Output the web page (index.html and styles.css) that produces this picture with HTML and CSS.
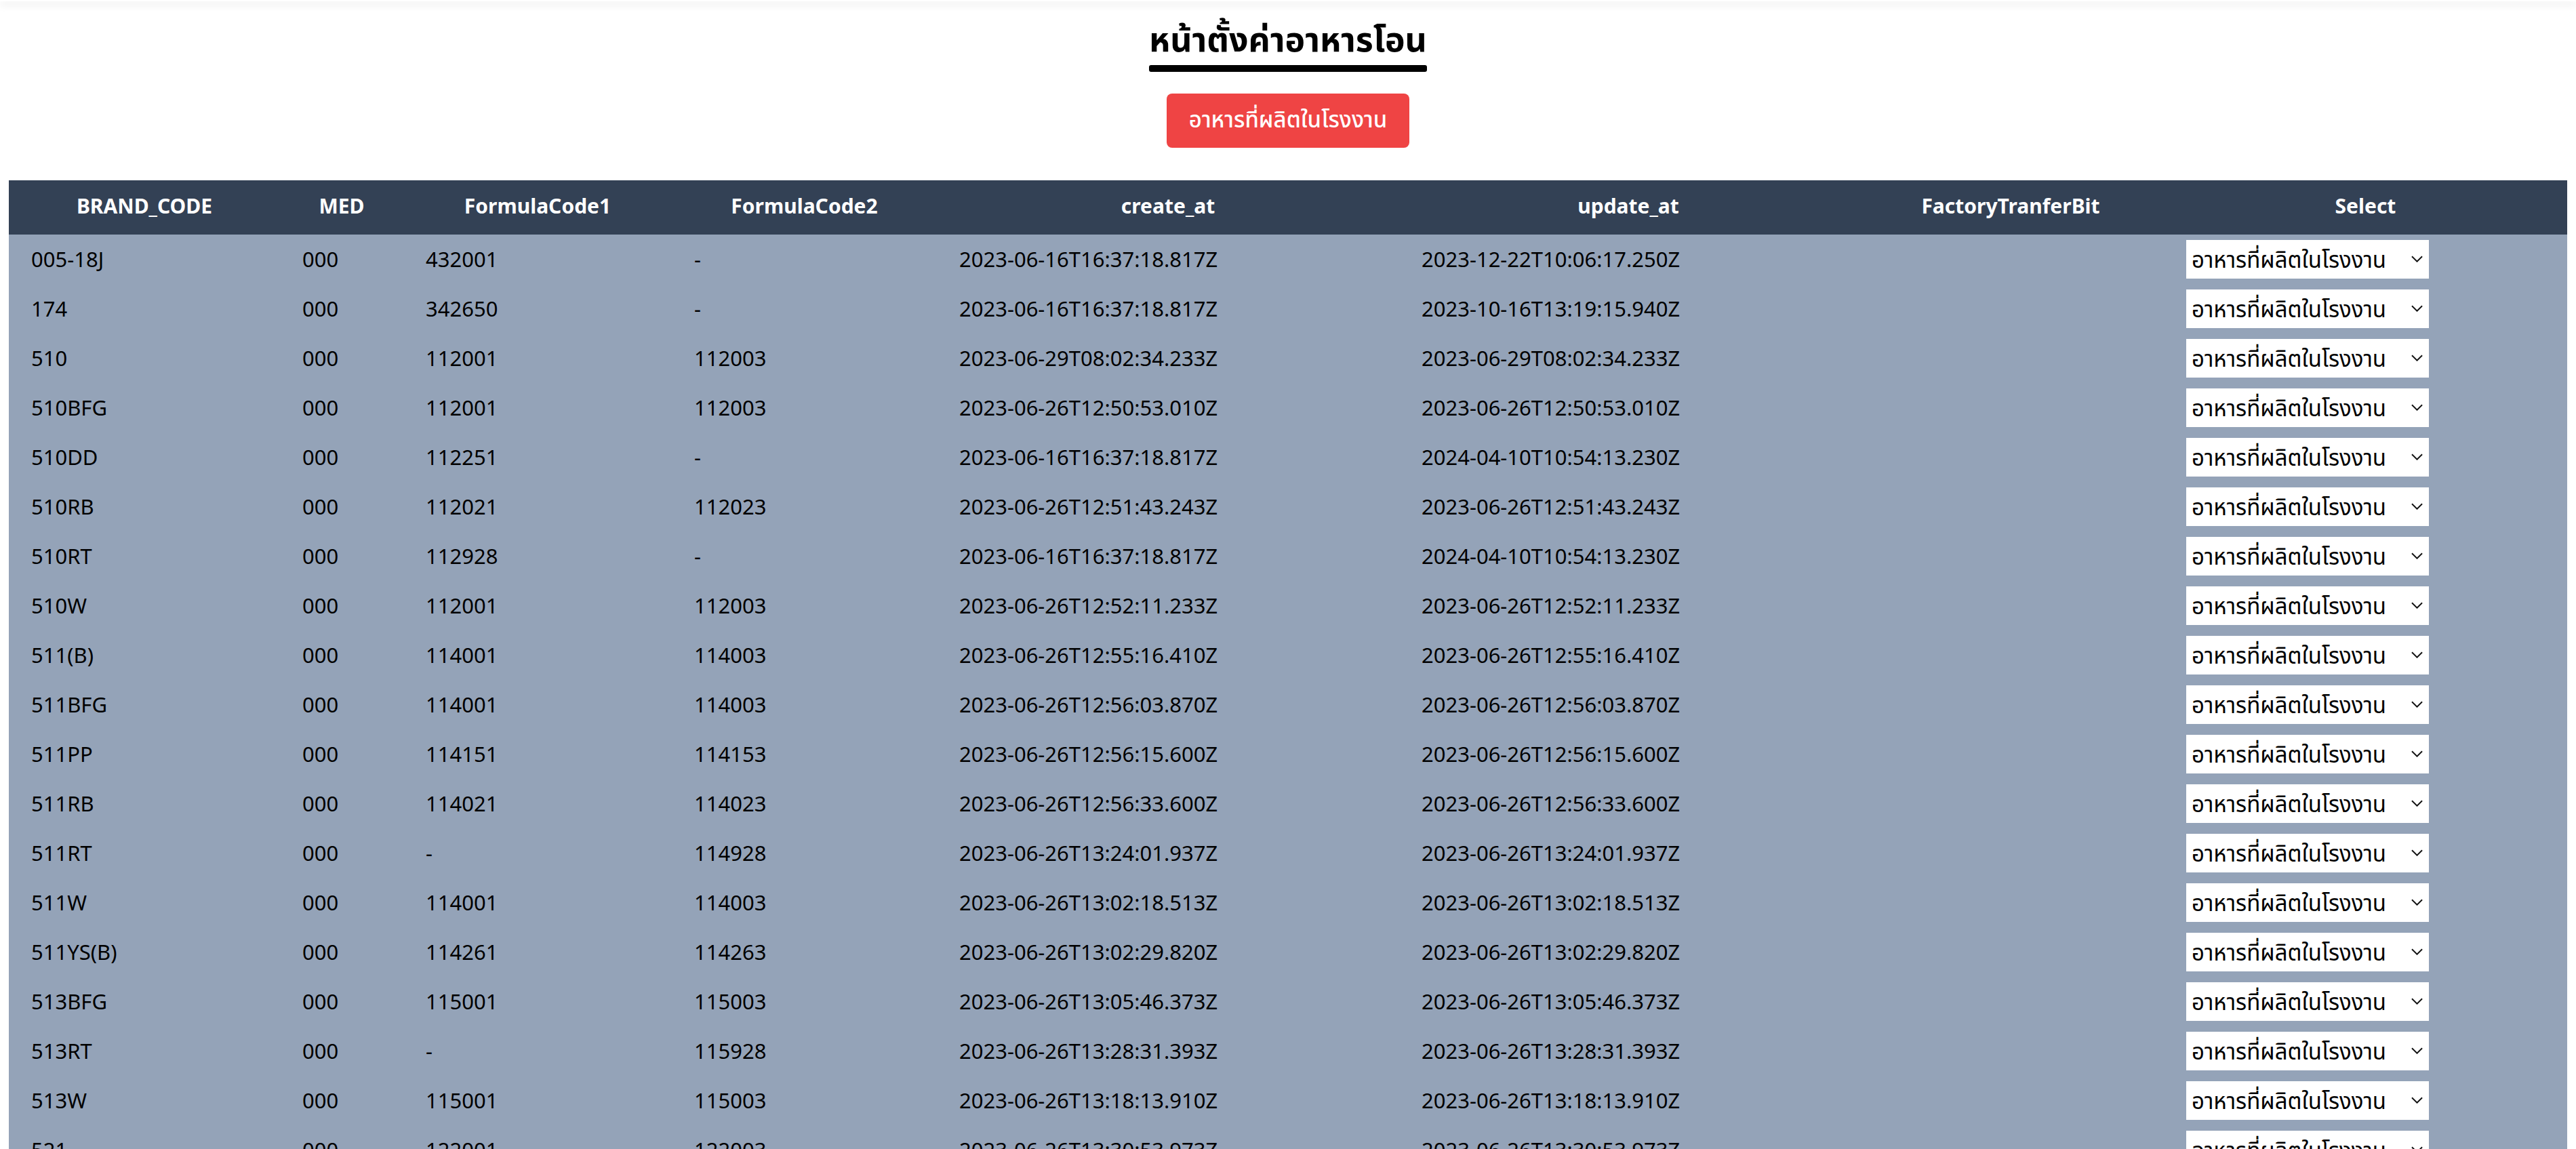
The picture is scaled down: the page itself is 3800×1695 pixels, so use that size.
FILE: index.html
```html
<!DOCTYPE html>
<html lang="th">
<head>
<meta charset="utf-8">
<title>หน้าตั้งค่าอาหารโอน</title>
<link rel="stylesheet" href="styles.css">
</head>
<body>
<div class="topbar"></div>
<main class="page">
  <div class="title-wrap">
    <h1 class="title">หน้าตั้งค่าอาหารโอน</h1>
    <div class="title-bar"></div>
  </div>
  <div class="actions">
    <button class="btn-red" type="button">อาหารที่ผลิตในโรงงาน</button>
  </div>
  <table class="grid">
    <colgroup>
      <col class="c-brand"><col class="c-med"><col class="c-f1"><col class="c-f2"><col class="c-create"><col class="c-update"><col class="c-bit"><col class="c-select">
    </colgroup>
    <thead>
      <tr>
        <th>BRAND_CODE</th><th>MED</th><th>FormulaCode1</th><th>FormulaCode2</th><th>create_at</th><th>update_at</th><th>FactoryTranferBit</th><th>Select</th>
      </tr>
    </thead>
    <tbody>
      <tr><td>005-18J</td><td>000</td><td>432001</td><td>-</td><td>2023-06-16T16:37:18.817Z</td><td>2023-12-22T10:06:17.250Z</td><td></td><td><div class="sel"><select><option>อาหารที่ผลิตในโรงงาน</option></select><svg class="chev" viewBox="0 0 18 10"><path d="M1 1 L9 9 L17 1" fill="none" stroke="#111" stroke-width="2"/></svg></div></td></tr>
      <tr><td>174</td><td>000</td><td>342650</td><td>-</td><td>2023-06-16T16:37:18.817Z</td><td>2023-10-16T13:19:15.940Z</td><td></td><td><div class="sel"><select><option>อาหารที่ผลิตในโรงงาน</option></select><svg class="chev" viewBox="0 0 18 10"><path d="M1 1 L9 9 L17 1" fill="none" stroke="#111" stroke-width="2"/></svg></div></td></tr>
      <tr><td>510</td><td>000</td><td>112001</td><td>112003</td><td>2023-06-29T08:02:34.233Z</td><td>2023-06-29T08:02:34.233Z</td><td></td><td><div class="sel"><select><option>อาหารที่ผลิตในโรงงาน</option></select><svg class="chev" viewBox="0 0 18 10"><path d="M1 1 L9 9 L17 1" fill="none" stroke="#111" stroke-width="2"/></svg></div></td></tr>
      <tr><td>510BFG</td><td>000</td><td>112001</td><td>112003</td><td>2023-06-26T12:50:53.010Z</td><td>2023-06-26T12:50:53.010Z</td><td></td><td><div class="sel"><select><option>อาหารที่ผลิตในโรงงาน</option></select><svg class="chev" viewBox="0 0 18 10"><path d="M1 1 L9 9 L17 1" fill="none" stroke="#111" stroke-width="2"/></svg></div></td></tr>
      <tr><td>510DD</td><td>000</td><td>112251</td><td>-</td><td>2023-06-16T16:37:18.817Z</td><td>2024-04-10T10:54:13.230Z</td><td></td><td><div class="sel"><select><option>อาหารที่ผลิตในโรงงาน</option></select><svg class="chev" viewBox="0 0 18 10"><path d="M1 1 L9 9 L17 1" fill="none" stroke="#111" stroke-width="2"/></svg></div></td></tr>
      <tr><td>510RB</td><td>000</td><td>112021</td><td>112023</td><td>2023-06-26T12:51:43.243Z</td><td>2023-06-26T12:51:43.243Z</td><td></td><td><div class="sel"><select><option>อาหารที่ผลิตในโรงงาน</option></select><svg class="chev" viewBox="0 0 18 10"><path d="M1 1 L9 9 L17 1" fill="none" stroke="#111" stroke-width="2"/></svg></div></td></tr>
      <tr><td>510RT</td><td>000</td><td>112928</td><td>-</td><td>2023-06-16T16:37:18.817Z</td><td>2024-04-10T10:54:13.230Z</td><td></td><td><div class="sel"><select><option>อาหารที่ผลิตในโรงงาน</option></select><svg class="chev" viewBox="0 0 18 10"><path d="M1 1 L9 9 L17 1" fill="none" stroke="#111" stroke-width="2"/></svg></div></td></tr>
      <tr><td>510W</td><td>000</td><td>112001</td><td>112003</td><td>2023-06-26T12:52:11.233Z</td><td>2023-06-26T12:52:11.233Z</td><td></td><td><div class="sel"><select><option>อาหารที่ผลิตในโรงงาน</option></select><svg class="chev" viewBox="0 0 18 10"><path d="M1 1 L9 9 L17 1" fill="none" stroke="#111" stroke-width="2"/></svg></div></td></tr>
      <tr><td>511(B)</td><td>000</td><td>114001</td><td>114003</td><td>2023-06-26T12:55:16.410Z</td><td>2023-06-26T12:55:16.410Z</td><td></td><td><div class="sel"><select><option>อาหารที่ผลิตในโรงงาน</option></select><svg class="chev" viewBox="0 0 18 10"><path d="M1 1 L9 9 L17 1" fill="none" stroke="#111" stroke-width="2"/></svg></div></td></tr>
      <tr><td>511BFG</td><td>000</td><td>114001</td><td>114003</td><td>2023-06-26T12:56:03.870Z</td><td>2023-06-26T12:56:03.870Z</td><td></td><td><div class="sel"><select><option>อาหารที่ผลิตในโรงงาน</option></select><svg class="chev" viewBox="0 0 18 10"><path d="M1 1 L9 9 L17 1" fill="none" stroke="#111" stroke-width="2"/></svg></div></td></tr>
      <tr><td>511PP</td><td>000</td><td>114151</td><td>114153</td><td>2023-06-26T12:56:15.600Z</td><td>2023-06-26T12:56:15.600Z</td><td></td><td><div class="sel"><select><option>อาหารที่ผลิตในโรงงาน</option></select><svg class="chev" viewBox="0 0 18 10"><path d="M1 1 L9 9 L17 1" fill="none" stroke="#111" stroke-width="2"/></svg></div></td></tr>
      <tr><td>511RB</td><td>000</td><td>114021</td><td>114023</td><td>2023-06-26T12:56:33.600Z</td><td>2023-06-26T12:56:33.600Z</td><td></td><td><div class="sel"><select><option>อาหารที่ผลิตในโรงงาน</option></select><svg class="chev" viewBox="0 0 18 10"><path d="M1 1 L9 9 L17 1" fill="none" stroke="#111" stroke-width="2"/></svg></div></td></tr>
      <tr><td>511RT</td><td>000</td><td>-</td><td>114928</td><td>2023-06-26T13:24:01.937Z</td><td>2023-06-26T13:24:01.937Z</td><td></td><td><div class="sel"><select><option>อาหารที่ผลิตในโรงงาน</option></select><svg class="chev" viewBox="0 0 18 10"><path d="M1 1 L9 9 L17 1" fill="none" stroke="#111" stroke-width="2"/></svg></div></td></tr>
      <tr><td>511W</td><td>000</td><td>114001</td><td>114003</td><td>2023-06-26T13:02:18.513Z</td><td>2023-06-26T13:02:18.513Z</td><td></td><td><div class="sel"><select><option>อาหารที่ผลิตในโรงงาน</option></select><svg class="chev" viewBox="0 0 18 10"><path d="M1 1 L9 9 L17 1" fill="none" stroke="#111" stroke-width="2"/></svg></div></td></tr>
      <tr><td>511YS(B)</td><td>000</td><td>114261</td><td>114263</td><td>2023-06-26T13:02:29.820Z</td><td>2023-06-26T13:02:29.820Z</td><td></td><td><div class="sel"><select><option>อาหารที่ผลิตในโรงงาน</option></select><svg class="chev" viewBox="0 0 18 10"><path d="M1 1 L9 9 L17 1" fill="none" stroke="#111" stroke-width="2"/></svg></div></td></tr>
      <tr><td>513BFG</td><td>000</td><td>115001</td><td>115003</td><td>2023-06-26T13:05:46.373Z</td><td>2023-06-26T13:05:46.373Z</td><td></td><td><div class="sel"><select><option>อาหารที่ผลิตในโรงงาน</option></select><svg class="chev" viewBox="0 0 18 10"><path d="M1 1 L9 9 L17 1" fill="none" stroke="#111" stroke-width="2"/></svg></div></td></tr>
      <tr><td>513RT</td><td>000</td><td>-</td><td>115928</td><td>2023-06-26T13:28:31.393Z</td><td>2023-06-26T13:28:31.393Z</td><td></td><td><div class="sel"><select><option>อาหารที่ผลิตในโรงงาน</option></select><svg class="chev" viewBox="0 0 18 10"><path d="M1 1 L9 9 L17 1" fill="none" stroke="#111" stroke-width="2"/></svg></div></td></tr>
      <tr><td>513W</td><td>000</td><td>115001</td><td>115003</td><td>2023-06-26T13:18:13.910Z</td><td>2023-06-26T13:18:13.910Z</td><td></td><td><div class="sel"><select><option>อาหารที่ผลิตในโรงงาน</option></select><svg class="chev" viewBox="0 0 18 10"><path d="M1 1 L9 9 L17 1" fill="none" stroke="#111" stroke-width="2"/></svg></div></td></tr>
      <tr><td>521</td><td>000</td><td>122001</td><td>122003</td><td>2023-06-26T13:30:53.973Z</td><td>2023-06-26T13:30:53.973Z</td><td></td><td><div class="sel"><select><option>อาหารที่ผลิตในโรงงาน</option></select><svg class="chev" viewBox="0 0 18 10"><path d="M1 1 L9 9 L17 1" fill="none" stroke="#111" stroke-width="2"/></svg></div></td></tr>
    </tbody>
  </table>
</main>
</body>
</html>
```
FILE: styles.css
```css
html, body {
  margin: 0;
  padding: 0;
  background: #ffffff;
}
body {
  font-family: "Noto Sans", "Noto Sans Thai", "Open Sans", sans-serif;
  font-size: 30px;
  color: #000;
}
.topbar {
  height: 2px;
  box-shadow: 0 4px 12px rgba(0, 0, 0, 0.22);
  background: #fff;
}
.page {
  padding: 0 13px;
  display: flex;
  flex-direction: column;
  align-items: center;
}
.title-wrap {
  display: flex;
  flex-direction: column;
  align-items: stretch;
  margin-top: 16px;
}
.title {
  margin: 0;
  font-size: 50px;
  font-weight: 700;
  line-height: 78px;
  text-align: center;
  white-space: nowrap;
}
.title-bar {
  height: 10px;
  background: #000;
  border-radius: 3px;
}
.actions {
  margin-top: 32px;
  margin-bottom: 48px;
}
.btn-red {
  height: 80px;
  padding: 0 33px;
  border: none;
  border-radius: 8px;
  background: #ef4444;
  color: #fff;
  font-family: inherit;
  font-size: 33px;
  font-weight: 500;
}
.grid {
  width: 3774px;
  table-layout: fixed;
  border-collapse: collapse;
  align-self: flex-start;
}
.c-brand { width: 400px; }
.c-med { width: 182px; }
.c-f1 { width: 396px; }
.c-f2 { width: 391px; }
.c-create { width: 682px; }
.c-update { width: 676px; }
.c-bit { width: 452px; }
.c-select { width: 595px; }
.grid thead tr {
  background: #334155;
  color: #fff;
  height: 80px;
}
.grid th {
  font-weight: 700;
  text-align: center;
  padding: 0 33px 4px;
  white-space: nowrap;
  line-height: 1.2;
}
.grid tbody tr {
  background: #94a3b8;
  height: 73px;
}
.grid td {
  padding: 8px 33px;
  text-align: left;
  white-space: nowrap;
  vertical-align: middle;
  font-size: 31px;
  line-height: 1.2;
}
.sel {
  position: relative;
  width: 358px;
  height: 57px;
}
.sel select {
  appearance: none;
  -webkit-appearance: none;
  width: 100%;
  height: 100%;
  border: none;
  border-radius: 0;
  background: #fff;
  color: #000;
  font-family: inherit;
  font-size: 33px;
  padding: 0 40px 0 8px;
}
.chev {
  position: absolute;
  right: 9px;
  top: 23px;
  width: 17px;
  height: 10px;
  pointer-events: none;
}
```
